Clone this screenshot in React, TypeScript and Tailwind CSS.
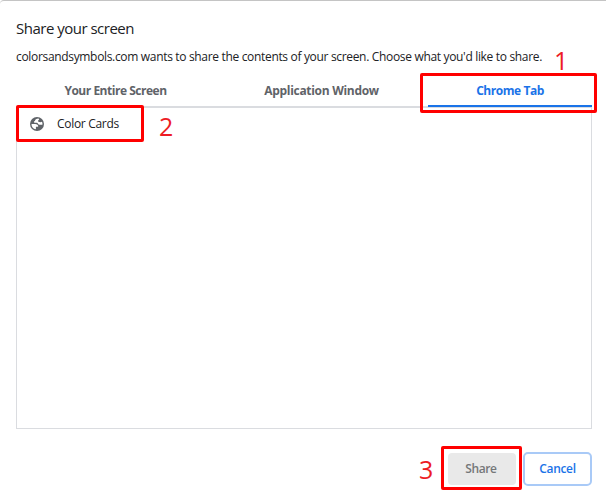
import React from "react";

function Tab({ label, active, x }: { label: string; active?: boolean; x: string }) {
  return (
    <div
      className={`flex h-[31px] items-center justify-center border-b-2 text-[12px] font-bold ${x} ${
        active ? "border-[#1a73e8] text-[#1a73e8]" : "border-transparent text-[#5f6368]"
      }`}
    >
      {label}
    </div>
  );
}

function Globe() {
  return (
    <svg className="size-[14px] shrink-0" viewBox="0 0 14 14">
      <circle cx="7" cy="7" r="7" fill="#5f6368" />
      <path
        d="M8.6 1.6C6.2 1.7 5 2.7 5 4H4.2V5.7H6.8C8 5.7 7.9 7.7 9.6 7.7H12.4C12.6 6.6 12.5 5.6 12 4.7C11 5.4 9.3 5.3 8.1 4.6V3.6L9.2 2.5Z"
        fill="white"
      />
      <path d="M1.5 7H5.1C7.2 7 8.3 7.9 8.2 9.8H5.9V12.3C3 11.8 1.4 9.8 1.5 7Z" fill="white" />
    </svg>
  );
}

export default function App() {
  return (
    <div className="relative flex h-[501px] w-[606px] flex-col overflow-hidden rounded-tl-[4px] border-t border-[#c4c4c4] bg-white px-4 pr-[14px] font-['Open_Sans','Noto_Sans',sans-serif] text-[#202124]">
      <h1 className="mt-4 h-[22px] text-[15px] leading-[22px] tracking-[-0.5px] whitespace-nowrap">
        Share your screen
      </h1>
      <p className="mt-[9px] h-[18px] text-[12px] leading-[18px] tracking-[-0.327px] whitespace-nowrap">
        colorsandsymbols.com wants to share the contents of your screen. Choose what you'd like to share.
      </p>
      <div className="mt-[9px] flex h-[33px] shrink-0 items-end border-b-2 border-[#dadce0] [&>div]:-mb-px">
        <Tab label="Your Entire Screen" x="w-[199px] tracking-[-0.48px]" />
        <Tab label="Application Window" x="ml-[7px] w-[199px] tracking-[-0.3px]" />
        <Tab label="Chrome Tab" active x="ml-[7px] w-[164px] tracking-[-0.45px]" />
      </div>
      <div className="h-[321px] shrink-0 border-x border-b border-[#dadce0]">
        <div className="flex h-8 items-center pl-[13px]">
          <Globe />
          <span className="ml-[13px] text-[12px] tracking-[-0.3px]">Color Cards</span>
        </div>
      </div>
      <div className="mt-[23px] flex h-[34px] items-center justify-end gap-[7px]">
        <button className="h-8 w-[68px] rounded-[4px] bg-[#e9e9e9] pr-[2px] text-[12px] font-semibold tracking-[-0.4px] text-[#757779]">Share</button>
        <button className="h-[34px] w-[69px] rounded-[5px] border-2 border-[#a9caf7] text-[12px] font-semibold tracking-[-0.35px] text-[#1a73e8]">Cancel</button>
      </div>

      <div className="absolute top-[72px] left-[420px] h-10 w-[177px] rounded-[2px] border-3 border-[#ff0000]" />
      <div className="absolute top-[104px] left-4 h-[37px] w-32 rounded-[2px] border-3 border-[#ff0000]" />
      <div className="absolute top-[445px] left-[441px] h-11 w-[81px] rounded-[2px] border-3 border-[#ff0000]" />
      <span className="absolute top-[43px] left-[554px] text-[25px] leading-8 text-[#ed1c24]">1</span>
      <span className="absolute top-[109px] left-[159px] text-[25px] leading-8 text-[#ed1c24]">2</span>
      <span className="absolute top-[452px] left-[419px] text-[25px] leading-8 text-[#ed1c24]">3</span>
    </div>
  );
}
